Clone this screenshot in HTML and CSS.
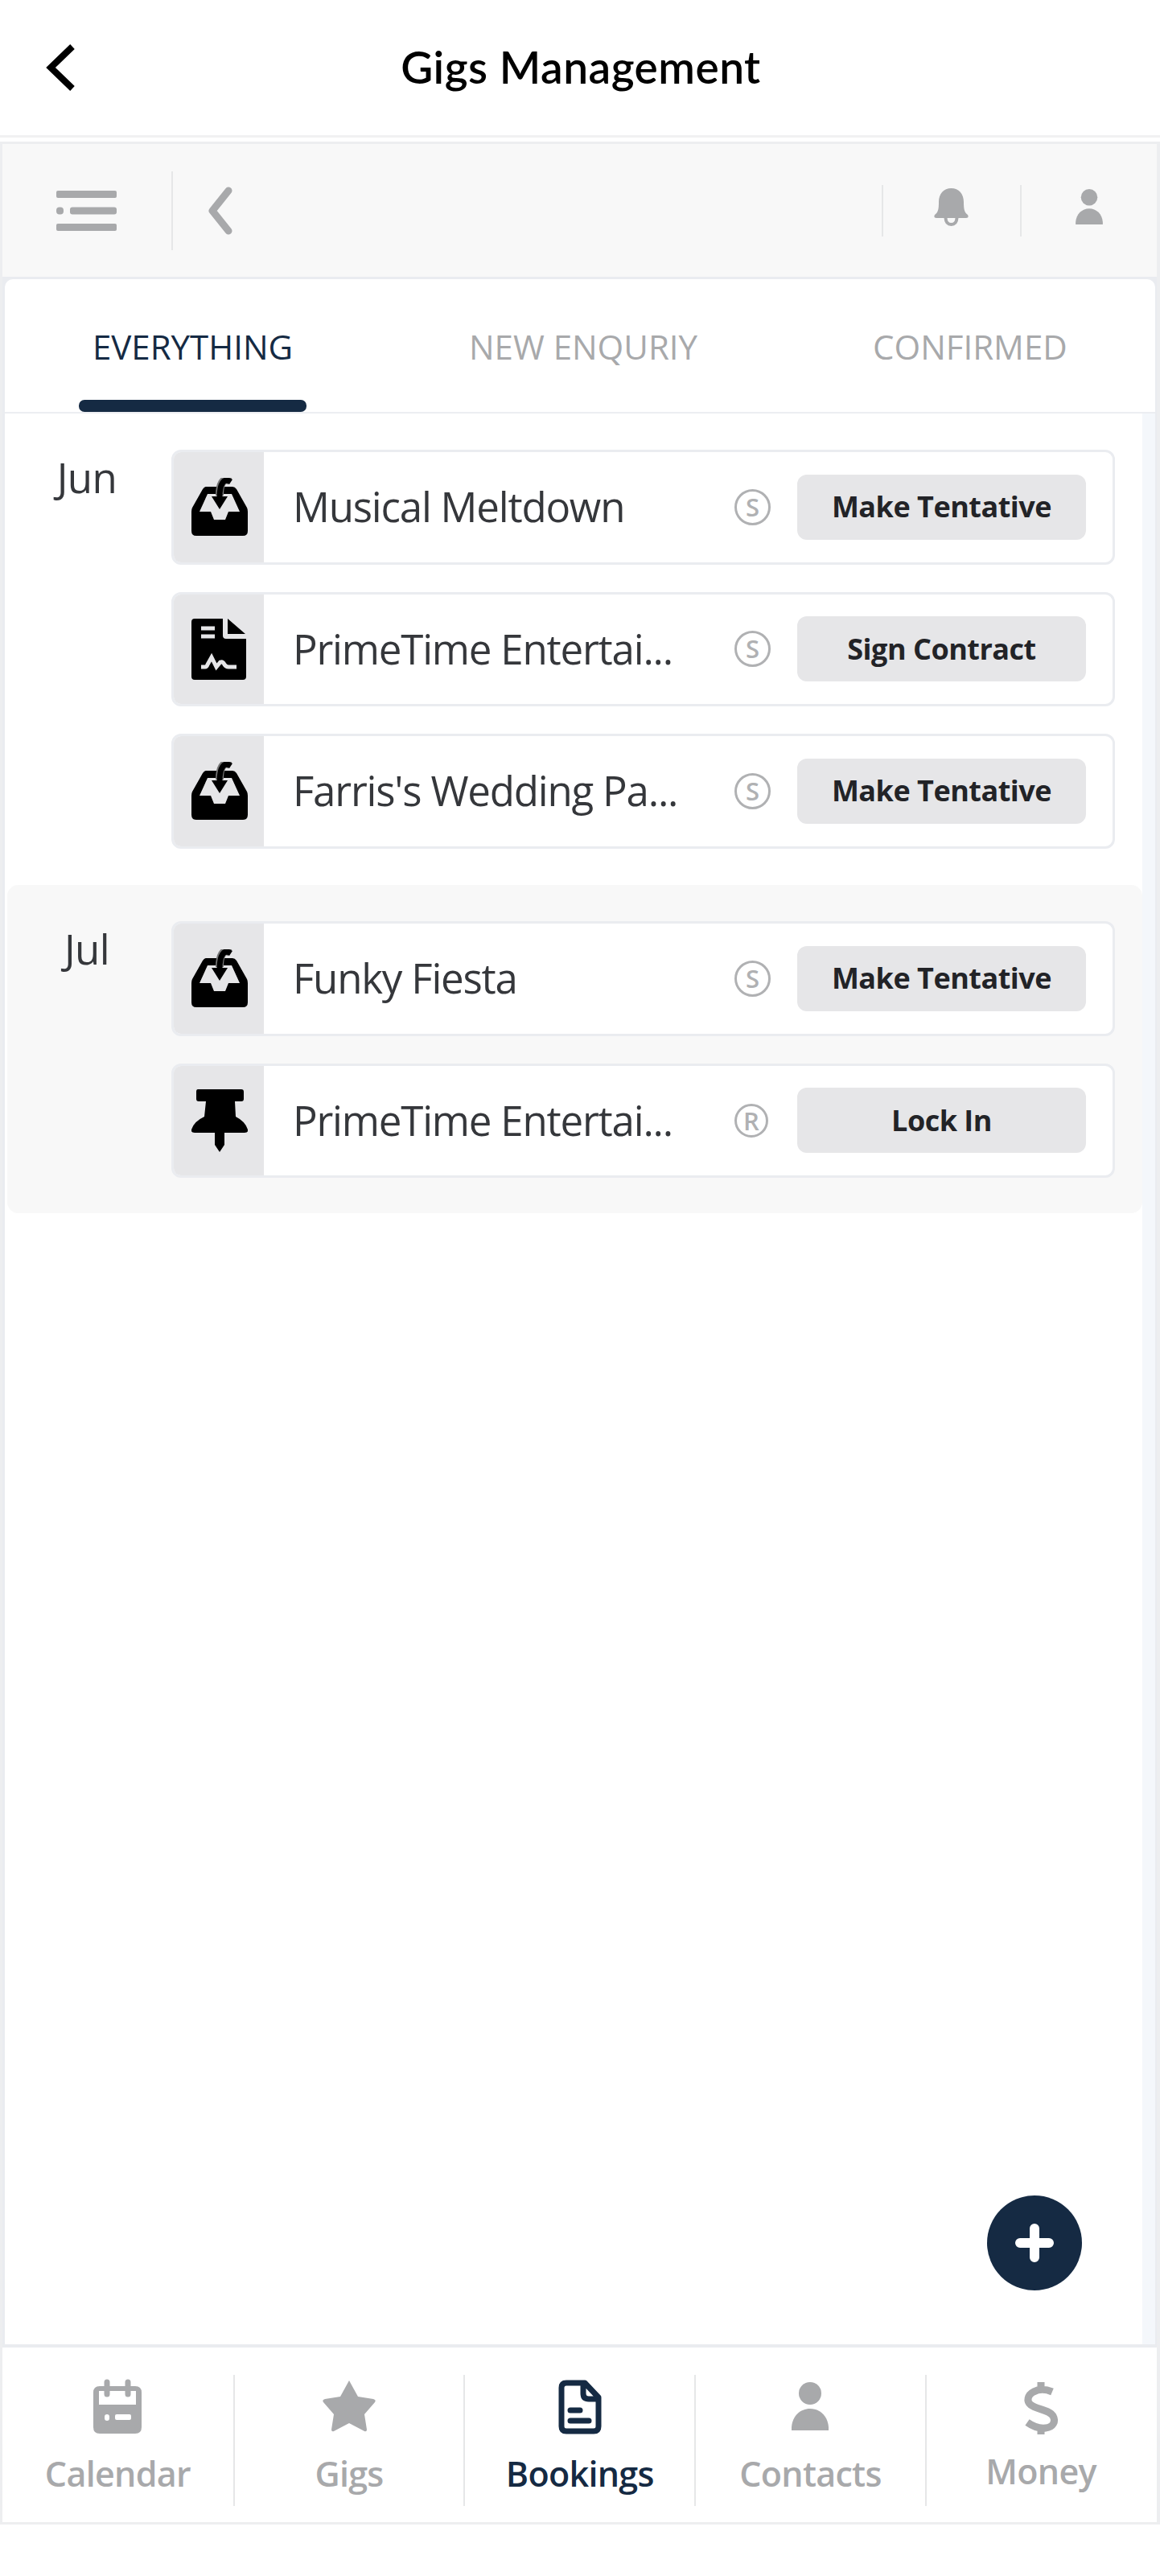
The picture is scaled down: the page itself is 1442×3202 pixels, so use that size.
FILE: index.html
```
<!DOCTYPE html>
<html lang="en">
<head>
<meta charset="utf-8">
<title>Gigs Management</title>
<link rel="stylesheet" href="styles.css">
</head>
<body>
<svg class="defs" width="0" height="0">
  <symbol id="inbox" viewBox="0 0 70 72">
    <path fill-rule="evenodd" d="M18 11 H51 Q54 11 56 14 L69 37 Q70 39 70 42 V66 Q70 72 64 72 H6 Q0 72 0 66 V42 Q0 39 1 37 L14 14 Q16 11 18 11 Z M20 20 L10 42 H24 L28 52 H42 L46 42 H60 L50 20 Z"/>
    <path class="arrow-halo" d="M48 4 C39 -1 35 8 35 22"/>
    <path class="arrow-line" d="M49 5 C40 -1 35 8 35 24"/>
    <path d="M25 23 H45 L35 39 Z"/>
  </symbol>
  <symbol id="contract" viewBox="0 0 68 76">
    <path d="M4 0 H39 V21 Q39 25 43 25 H68 V72 Q68 76 64 76 H4 Q0 76 0 72 V4 Q0 0 4 0 Z M45 0 L67 19 H45 Z"/>
    <path class="cut" d="M12 12 H29 M12 22 H29 M12 60 H17 Q19 60 20 57 L25 48 L31 60 L36 54 Q39 53 41 57 Q43 60 46 60 H56"/>
  </symbol>
  <symbol id="pin" viewBox="0 0 70 78">
    <path d="M8 0 H62 Q65 0 65 3 V12 Q65 15 62 15 H54 L55 34 Q67 40 70 50 Q71 54 66 54 H4 Q-1 54 0 50 Q3 40 16 34 L18 15 H9 Q6 15 6 12 V3 Q6 0 8 0 Z M29 54 H41 V69 L35 78 L29 69 Z"/>
  </symbol>
  <symbol id="person" viewBox="0 0 46 60">
    <ellipse cx="23" cy="14" rx="14" ry="14"/><path d="M0 60 V56 C1 42 11 33 23 33 C35 33 45 42 46 56 V60 Z"/>
  </symbol>
</svg>

<header class="title-bar">
  <svg class="back" width="34" height="58" viewBox="0 0 34 58"><path d="M31 3 L4 29 L31 55"/></svg>
  <h1>Gigs Management</h1>
</header>

<main class="app">
  <div class="toolbar">
    <svg class="menu" width="75" height="50" viewBox="0 0 75 50"><rect width="75" height="9" rx="2"/><rect y="20.500" width="9" height="9" rx="4"/><rect x="17" y="20.500" width="58" height="9" rx="3"/><rect y="41" width="75" height="9" rx="2"/></svg>
    <span class="rule tall"></span>
    <svg class="prev" width="30" height="60" viewBox="0 0 30 60"><path d="M26 5 L6 30 L26 55"/></svg>
    <span class="rule push"></span>
    <svg class="bell" width="43" height="47" viewBox="0 0 43 47"><path d="M21.500 0 C31 0 37 7 37 17 C37 27 38 30 42 33 Q44 37 40 37 H3 Q-1 37 1 33 C5 30 6 27 6 17 C6 7 12 0 21.500 0 Z"/><path class="clapper" d="M14.500 37 Q15 45 21.500 45 Q28 45 28.500 37"/></svg>
    <span class="rule"></span>
    <svg class="user" width="34" height="44"><use href="#person"/></svg>
  </div>

  <section class="panel">
    <nav class="tabs">
      <a class="tab active">EVERYTHING<span class="marker"></span></a>
      <a class="tab enquiry">NEW ENQURIY</a>
      <a class="tab confirmed">CONFIRMED</a>
    </nav>
    <div class="scroller">
      <div class="months">
        <section class="month june">
          <h2>Jun</h2>
          <div class="bookings">
            <article class="booking"><div class="kind"><svg width="70" height="72"><use href="#inbox"/></svg></div><span class="name">Musical Meltdown</span><span class="badge">S</span><button>Make Tentative</button></article>
            <article class="booking"><div class="kind"><svg width="68" height="76"><use href="#contract"/></svg></div><span class="name">PrimeTime Entertai...</span><span class="badge">S</span><button>Sign Contract</button></article>
            <article class="booking"><div class="kind"><svg width="70" height="72"><use href="#inbox"/></svg></div><span class="name">Farris's Wedding Pa...</span><span class="badge">S</span><button>Make Tentative</button></article>
          </div>
        </section>
        <section class="month july">
          <h2>Jul</h2>
          <div class="bookings">
            <article class="booking"><div class="kind"><svg width="70" height="72"><use href="#inbox"/></svg></div><span class="name">Funky Fiesta</span><span class="badge">S</span><button>Make Tentative</button></article>
            <article class="booking"><div class="kind"><svg width="70" height="78"><use href="#pin"/></svg></div><span class="name">PrimeTime Entertai...</span><span class="badge small">R</span><button>Lock In</button></article>
          </div>
        </section>
      </div>
      <div class="track"></div>
    </div>
  </section>
  <div class="fab"><svg width="48" height="48" viewBox="0 0 48 48"><path d="M24 6 V42 M6 24 H42"/></svg></div>

  <nav class="bottom">
    <a class="item"><span class="glyph"><svg width="60" height="68" viewBox="0 0 60 68"><path fill-rule="evenodd" d="M8 8 H52 Q60 8 60 16 V59 Q60 67 52 67 H8 Q0 67 0 59 V16 Q0 8 8 8 Z M7 14 V31 H53 V14 Z"/><path class="ring" d="M17 3 V18 M43 3 V18"/><rect class="hole" x="14" y="43" width="6" height="8" rx="3"/><rect class="hole" x="27" y="43" width="20" height="7" rx="2"/></svg></span>Calendar</a>
    <a class="item"><span class="glyph"><svg width="68" height="66" viewBox="0 0 68 66"><path d="M34 1 L45 21 L64 24 Q68 25 66 28 L53 43 L56 62 Q56 65 53 64 L34 54 L15 64 Q12 65 12 62 L15 43 L2 28 Q0 25 4 24 L23 21 Z"/></svg></span>Gigs</a>
    <a class="item current"><span class="glyph"><svg width="54" height="68" viewBox="0 0 54 68"><path class="outline" d="M10 4 H33 L50 22 V58 Q50 64 44 64 H10 Q4 64 4 58 V10 Q4 4 10 4 Z M31 4 V17 Q31 24 38 24 H50 M15 38 H27 M15 51 H38"/></svg></span>Bookings</a>
    <a class="item"><span class="glyph lower"><svg width="46" height="60"><use href="#person"/></svg></span>Contacts</a>
    <a class="item money"><span class="glyph"><svg width="42" height="71" viewBox="0 0 42 71"><path class="dollar" d="M21 3 V12 M21 60 V68 M35 15 C28 12 19 11 12 15 C4 19 3 27 8 31 C15 37 31 37 36 45 C40 52 36 59 27 60 C19 61 11 58 4 53"/></svg></span>Money</a>
  </nav>
</main>
</body>
</html>
```
FILE: styles.css
```
* { box-sizing: border-box; }
body { margin: 0; background: #fff; font-family: "Open Sans", "Noto Sans", sans-serif; }
h1, h2 { margin: 0; font-weight: 400; }
svg { display: block; fill: #a8a9ab; overflow: visible; }
.defs { position: absolute; }

.title-bar { display: flex; align-items: center; height: 171px; padding-left: 59px; border-bottom: 3px solid #f1f1f2; }
.title-bar h1 { flex: 1; margin: -2px 91px 0 0; text-align: center; font: 600 55px/80px Lato, sans-serif; color: #000; letter-spacing: 0.5px; }
.back { fill: none; stroke: #000; stroke-width: 8; }

.app { height: 2962px; margin-top: 5px; border: 3px solid #edeef0; border-width: 3px 4px 3px 3px; display: flex; flex-direction: column; position: relative; }
.toolbar { display: flex; align-items: center; height: 165px; padding: 0 67px; background: #f8f8f8; flex: none; }
.rule { width: 2px; height: 64px; background: #e6e7e8; }
.rule.tall { height: 98px; margin-left: 68px; }
.rule.push { margin-left: auto; }
.prev { margin-left: 43px; fill: none; stroke: #a8a9ab; stroke-width: 9; stroke-linecap: round; stroke-linejoin: round; }
.bell { margin: 0 64px 9px 63px; }
.clapper { fill: none; stroke: #a8a9ab; stroke-width: 4; }
.user { margin: 0 0 9px 67px; }

.panel { height: 2574px; flex: none; display: flex; flex-direction: column; padding: 3px 2px 4px 3px; background: #eaecf0; }
.tabs { display: flex; height: 167px; background: #fff; border-bottom: 2px solid #eceef2; border-radius: 10px 10px 0 0; padding-left: 92px; font-size: 42px; line-height: 58px; color: #a8a9ab; }
.tab { padding-top: 55px; height: 165px; white-space: nowrap; }
.tab.active { display: flex; flex-direction: column; justify-content: space-between; align-items: center; width: 283px; color: #152a43; }
.marker { width: 283px; height: 15px; border-radius: 7px; background: #152a43; }
.tab.enquiry { margin-left: 202px; }
.tab.confirmed { margin-left: 218px; }
.scroller { flex: 1; display: flex; background: #fff; }
.months { flex: 1; }
.track { width: 16px; background: #f4f7fb; }

.month { display: flex; padding-left: 43px; margin-left: 3px; }
.month h2 { width: 110px; margin: -1px 50px 0 1px; text-align: center; font-size: 51px; line-height: 70px; letter-spacing: -0.6px; color: #35373b; }
.june { padding-top: 45px; height: 586px; }
.july { padding-top: 45px; height: 408px; background: #f8f8f8; border-radius: 14px; }
.bookings { display: flex; flex-direction: column; gap: 34px; }
.booking { display: flex; align-items: center; width: 1173px; height: 142.500px; border: 3px solid #eaecf0; border-radius: 12px; background: #fff; overflow: hidden; flex: none; }
.kind { width: 114px; height: 144px; margin-left: -2px; padding-left: 24px; background: #e6e6e8; display: flex; align-items: center; }
.kind svg { fill: #000; }
.arrow-halo { fill: none; stroke: #777; stroke-width: 10; }
.arrow-line { fill: none; stroke: #000; stroke-width: 7; }
.cut { fill: none; stroke: #e6e6e8; stroke-width: 5; }
.name { width: 550px; padding: 0 0 2px 36px; font-size: 51px; line-height: 70px; letter-spacing: -1.2px; color: #35373b; white-space: nowrap; }
.badge { width: 45px; height: 45px; margin-left: 35px; border: 3px solid #b0b1b3; border-radius: 50%; font-size: 31px; line-height: 39px; font-weight: 600; text-align: center; color: #b0b1b3; }
.badge.small { width: 42px; height: 42px; margin-right: 3px; line-height: 36px; }
.booking button { width: 359px; height: 81px; margin-left: 33px; padding: 0; border: 0; border-radius: 12px; background: #e6e6e8; font: 700 36px/50px "Open Sans", sans-serif; letter-spacing: -0.5px; color: #222327; }

.fab { position: absolute; left: 1224px; top: 2550px; width: 118px; height: 118px; border-radius: 50%; background: #152a43; display: flex; align-items: center; justify-content: center; }
.fab svg { fill: none; stroke: #fff; stroke-width: 12; stroke-linecap: round; }

.bottom { flex: 1; display: flex; background: #fff; padding-top: 34px; }
.item { width: 286.700px; height: 163px; border-left: 2px solid #e6e7e8; display: flex; flex-direction: column; align-items: center; font-size: 43px; line-height: 58px; font-weight: 600; letter-spacing: -0.7px; color: #a8a9ab; }
.item:first-child { border-left: 0; }
.glyph { height: 94px; padding-top: 6px; }
.glyph.lower { padding-top: 9px; }
.ring { fill: none; stroke: #a8a9ab; stroke-width: 7; stroke-linecap: round; }
.hole { fill: #fff; }
.outline { fill: none; stroke: #152a43; stroke-width: 7; stroke-linejoin: round; stroke-linecap: round; }
.dollar { fill: none; stroke: #a8a9ab; stroke-width: 9; }
.current { color: #152a43; }
.money .glyph { height: 91px; }
```
